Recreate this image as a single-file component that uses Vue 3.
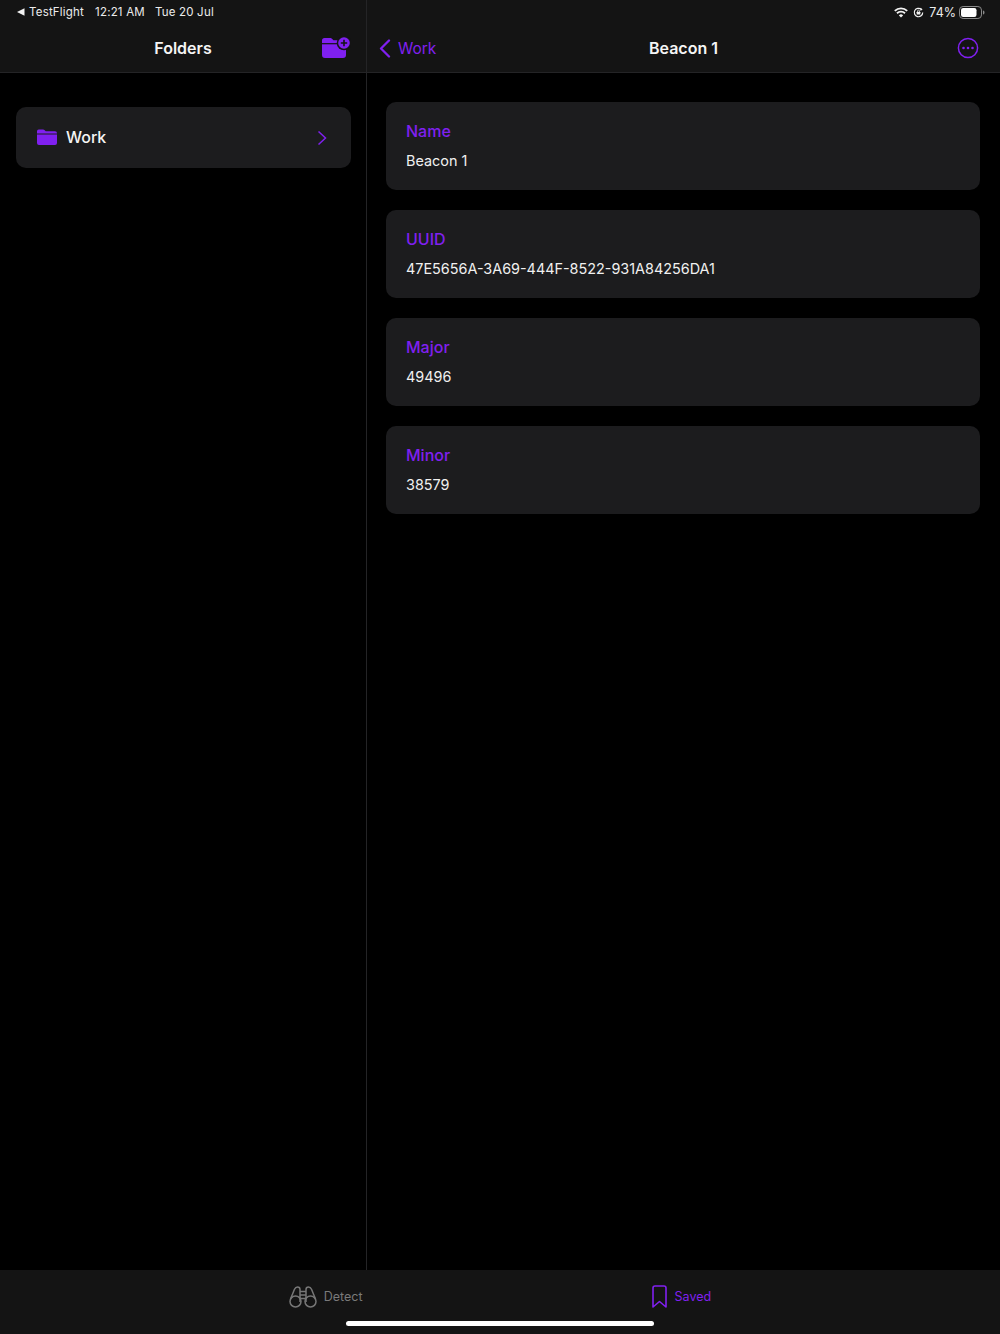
<script setup>
const fields = [
  { label: 'Name', value: 'Beacon 1' },
  { label: 'UUID', value: '47E5656A-3A69-444F-8522-931A84256DA1' },
  { label: 'Major', value: '49496' },
  { label: 'Minor', value: '38579' },
]
</script>

<template>
  <div class="screen">
    <div class="status">
      <div class="status-left">
        <svg class="back-tri" width="8" height="8" viewBox="0 0 8 8"><path d="M0 4 7.5 .2V7.8Z" fill="#f2f2f2" /></svg>
        <span class="tf">TestFlight</span>
        <span class="time">12:21 AM</span>
        <span class="date">Tue 20 Jul</span>
      </div>
      <div class="status-right">
        <svg width="14" height="11" viewBox="0 0 14 11" fill="none" stroke="#f2f2f2" stroke-width="1.9">
          <path d="M.8 3.9a9 9 0 0 1 12.4 0" />
          <path d="M3 6.2a5.8 5.8 0 0 1 8 0" />
          <path d="M7 10.6 4.9 8.4a3 3 0 0 1 4.2 0Z" fill="#f2f2f2" stroke="none" />
        </svg>
        <svg class="lock" width="11" height="11" viewBox="0 0 11 11" fill="none">
          <path d="M9.7 5.5A4.2 4.2 0 1 1 8.3 2.4" stroke="#f2f2f2" stroke-width="1.2" />
          <path d="M7.3 .8 9.6 2.2 7.6 3.9Z" fill="#f2f2f2" />
          <rect x="3.7" y="4.8" width="3.6" height="2.8" rx=".4" fill="#f2f2f2" />
          <path d="M4.5 5V4.1a1 1 0 0 1 2 0V5" stroke="#f2f2f2" stroke-width=".7" />
        </svg>
        <span class="pct">74%</span>
        <svg width="26" height="13" viewBox="0 0 26 13" fill="none">
          <rect x=".5" y=".5" width="22" height="12" rx="3.6" stroke="#8a8a8a" />
          <rect x="2" y="2" width="15.5" height="9" rx="2.2" fill="#fff" />
          <path d="M24 4.5c1 .3 1.5 1 1.5 2s-.5 1.700-1.500 2Z" fill="#8a8a8a" />
        </svg>
      </div>
    </div>

    <div class="panes">
      <aside class="sidebar">
        <header class="nav">
          <h1 class="nav-title">Folders</h1>
          <button class="folder-add" aria-label="Add folder">
            <svg width="29" height="21" viewBox="0 0 29 21">
              <path d="M0 3.500A2.500 2.500 0 0 1 2.500 1H8c1 0 1.500.3 2.200 1l1.300 1.200H21a3 3 0 0 1 3 3V18a3 3 0 0 1-3 3H3a3 3 0 0 1-3-3Z" fill="#8020f0" />
              <path d="M0 6.700h24" stroke="#141414" stroke-width="1.200" />
              <circle cx="22" cy="6" r="7.300" fill="#141414" />
              <circle cx="22" cy="6" r="5.800" fill="#8020f0" />
              <path d="M22 2.800v6.400M18.800 6h6.400" stroke="#141414" stroke-width="1.600" />
            </svg>
          </button>
        </header>
        <div class="side-body">
          <div class="folder-row">
            <svg class="folder-ico" width="20" height="16" viewBox="0 0 20 16">
              <path d="M0 2.200A1.700 1.700 0 0 1 1.700.5H6c.8 0 1.200.2 1.700.7l1 1H18a2 2 0 0 1 2 2V14a2 2 0 0 1-2 2H2a2 2 0 0 1-2-2Z" fill="#8020f0" />
              <path d="M0 5h20" stroke="#1c1c1e" stroke-width="1" />
            </svg>
            <span class="folder-name">Work</span>
            <svg class="chev" width="10" height="16" viewBox="0 0 10 16" fill="none">
              <path d="M1.500 1.500 8.500 8l-7 6.500" stroke="#8020f0" stroke-width="1.500" />
            </svg>
          </div>
        </div>
      </aside>

      <main class="detail">
        <header class="nav">
          <div class="back">
            <svg width="12" height="19" viewBox="0 0 12 19" fill="none">
              <path d="M10 1.500 2 9.500l8 8" stroke="#8020f0" stroke-width="2.300" stroke-linecap="round" stroke-linejoin="round" />
            </svg>
            <span>Work</span>
          </div>
          <h1 class="nav-title">Beacon 1</h1>
          <svg class="more" width="22" height="22" viewBox="0 0 22 22" fill="none">
            <circle cx="11" cy="11" r="9.600" stroke="#8020f0" stroke-width="1.500" />
            <circle cx="6.500" cy="11" r="1.300" fill="#8020f0" />
            <circle cx="11" cy="11" r="1.300" fill="#8020f0" />
            <circle cx="15.500" cy="11" r="1.300" fill="#8020f0" />
          </svg>
        </header>
        <div class="cards">
          <section v-for="f in fields" :key="f.label" class="card">
            <div class="card-label">{{ f.label }}</div>
            <div class="card-value">{{ f.value }}</div>
          </section>
        </div>
      </main>
    </div>

    <footer class="tabs">
      <div class="tab">
        <svg width="28" height="22" viewBox="0 0 28 22" fill="none" stroke="#777" stroke-width="1.500">
          <circle cx="6.500" cy="15.500" r="5.500" />
          <circle cx="21.500" cy="15.500" r="5.500" />
          <path d="M1.500 13 5.500 3.300C6.200 1.700 7.200 1 8.500 1s2.500 1 2.500 2.500V16" />
          <path d="M26.500 13 22.500 3.300C21.800 1.700 20.800 1 19.500 1S17 2 17 3.500V16" />
          <path d="M11 5.500h6M11 9h6M11 12.500h6" />
        </svg>
        <span>Detect</span>
      </div>
      <div class="tab active">
        <svg width="15" height="23" viewBox="0 0 15 23" fill="none">
          <path d="M1 3a2 2 0 0 1 2-2h9a2 2 0 0 1 2 2v19l-6.500-5.500L1 22Z" stroke="#8020f0" stroke-width="1.600" stroke-linejoin="round" />
        </svg>
        <span>Saved</span>
      </div>
      <div class="home-bar"></div>
    </footer>
  </div>
</template>

<style scoped>
.screen {
  position: relative;
  width: 1000px;
  height: 1334px;
  display: flex;
  flex-direction: column;
  overflow: hidden;
  background: #000;
  color: #f2f2f2;
  font-family: Inter, "Liberation Sans", sans-serif;
}
.status {
  position: absolute;
  z-index: 2;
  top: 0;
  left: 0;
  right: 0;
  height: 24px;
  display: flex;
  justify-content: space-between;
  align-items: center;
  font-size: 11.5px;
  letter-spacing: .2px;
  color: #ececec;
}
.status-left {
  display: flex;
  align-items: center;
  margin-left: 17px;
}
.back-tri { margin-right: 4px; }
.time { margin-left: 11px; }
.date { margin-left: 10px; }
.status-right {
  display: flex;
  align-items: center;
  gap: 5px;
  margin-right: 15px;
}
.pct {
  margin-right: -2px;
  font-size: 12.5px;
  letter-spacing: 0;
}
.panes {
  flex: 1;
  display: flex;
  min-height: 0;
}
.sidebar {
  width: 367px;
  box-sizing: border-box;
  flex: none;
  border-right: 1px solid #242426;
  display: flex;
  flex-direction: column;
}
.detail {
  flex: 1;
  min-width: 0;
  display: flex;
  flex-direction: column;
}
.nav {
  height: 73px;
  padding-top: 24px;
  box-sizing: border-box;
  flex: none;
  display: flex;
  align-items: center;
  justify-content: center;
  position: relative;
  background: #141414;
  border-bottom: 1px solid #242426;
}
.nav-title {
  margin: 0;
  font-size: 16px;
  font-weight: 600;
  color: #f5f5f5;
}
.folder-add {
  position: absolute;
  left: 322px;
  top: 37px;
  width: 29px;
  height: 21px;
  padding: 0;
  border: 0;
  background: none;
  display: block;
}
.folder-add svg { display: block; }
.side-body { padding: 34px 15px 0 16px; }
.folder-row {
  height: 61px;
  box-sizing: border-box;
  padding: 0 24px 2px 21px;
  border-radius: 10px;
  background: #1c1c1e;
  display: flex;
  align-items: center;
}
.folder-ico { flex: none; }
.folder-name {
  margin-left: 9px;
  flex: 1;
  font-size: 16px;
  font-weight: 500;
  color: #f5f5f5;
}
.chev { margin-top: 2px; }
.back {
  position: absolute;
  left: 12px;
  top: 24px;
  bottom: 0;
  display: flex;
  align-items: center;
  gap: 7px;
  font-size: 15.500px;
  color: #8020f0;
}
.more {
  position: absolute;
  left: 590px;
  top: 37px;
}
.cards {
  padding: 29px 20px 0 19px;
  display: flex;
  flex-direction: column;
  gap: 20.500px;
}
.card {
  height: 87.500px;
  box-sizing: border-box;
  padding: 19px 20px 0;
  border-radius: 10px;
  background: #1c1c1e;
}
.card-label {
  font-size: 16px;
  line-height: 20px;
  font-weight: 500;
  color: #8020f0;
}
.card-value {
  margin-top: 10px;
  font-size: 14.400px;
  line-height: 20px;
  color: #f0f0f0;
}
.tabs {
  position: relative;
  height: 64px;
  flex: none;
  background: #141414;
  display: flex;
  justify-content: center;
  gap: 289px;
  padding-top: 15px;
  box-sizing: border-box;
}
.tab {
  display: flex;
  align-items: center;
  gap: 7px;
  height: 23px;
  font-size: 12.500px;
  color: #7a7a7a;
}
.tab.active { color: #8020f0; }
.tab.active svg { margin-right: 1px; }
.home-bar {
  position: absolute;
  left: 346px;
  bottom: 8px;
  width: 308px;
  height: 5px;
  border-radius: 3px;
  background: #fff;
}
</style>
